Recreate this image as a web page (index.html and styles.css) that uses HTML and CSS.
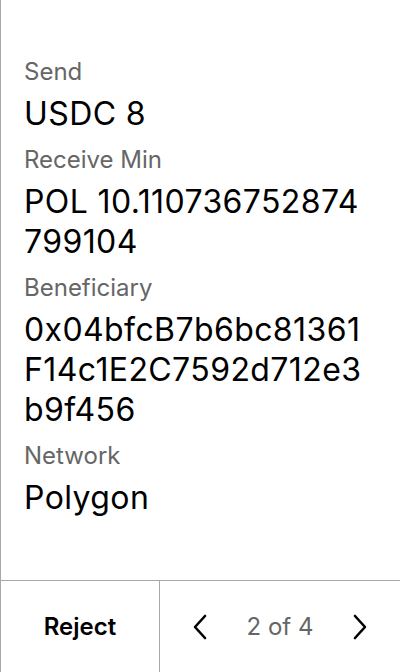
FILE: index.html
```html
<!DOCTYPE html>
<html>
<head>
<meta charset="utf-8">
<link rel="stylesheet" href="styles.css">
</head>
<body>
<div class="screen">
  <main class="details">
    <div class="field">
      <div class="label">Send</div>
      <div class="value">USDC 8</div>
    </div>
    <div class="field">
      <div class="label">Receive Min</div>
      <div class="value">POL 10.110736752874799104</div>
    </div>
    <div class="field">
      <div class="label">Beneficiary</div>
      <div class="value">0x04bfcB7b6bc81361F14c1E2C7592d712e3b9f456</div>
    </div>
    <div class="field">
      <div class="label">Network</div>
      <div class="value">Polygon</div>
    </div>
  </main>
  <footer class="actions">
    <button class="reject">Reject</button>
    <div class="pager">
      <button class="nav" aria-label="Previous">
        <svg width="16" height="26" viewBox="0 0 16 26"><path d="M13 2 L3 13 L13 24" fill="none" stroke="#000" stroke-width="2.6" stroke-linecap="round" stroke-linejoin="round"/></svg>
      </button>
      <span class="count">2 of 4</span>
      <button class="nav" aria-label="Next">
        <svg width="16" height="26" viewBox="0 0 16 26"><path d="M3 2 L13 13 L3 24" fill="none" stroke="#000" stroke-width="2.6" stroke-linecap="round" stroke-linejoin="round"/></svg>
      </button>
    </div>
  </footer>
</div>
</body>
</html>
```
FILE: styles.css
```css
* { box-sizing: border-box; }
html, body { margin: 0; padding: 0; background: #fff; }
body { font-family: Inter, "Noto Sans", sans-serif; color: #000; }
.screen {
  width: 400px;
  height: 672px;
  display: flex;
  flex-direction: column;
  border-left: 1px solid #a8a8a8;
}
.details {
  flex: 1;
  padding: 56px 28px 0 23px;
  display: flex;
  flex-direction: column;
  gap: 10px;
}
.label {
  font-size: 24px;
  line-height: 32px;
  color: #666;
}
.value {
  font-size: 32px;
  line-height: 40px;
  word-break: break-all;
  margin-top: 6px;
  letter-spacing: 0.4px;
}
.actions {
  height: 92px;
  border-top: 1px solid #a8a8a8;
  display: flex;
}
button {
  font-family: inherit;
  background: none;
  border: 0;
  padding: 0;
  color: inherit;
}
.reject {
  width: 159px;
  border-right: 1px solid #a8a8a8;
  font-size: 24px;
  font-weight: 600;
}
.pager {
  flex: 1;
  display: flex;
  align-items: center;
  justify-content: space-between;
  padding: 0 32px;
}
.nav { display: flex; width: 16px; }
.count { font-size: 24px; color: #666; }
```
